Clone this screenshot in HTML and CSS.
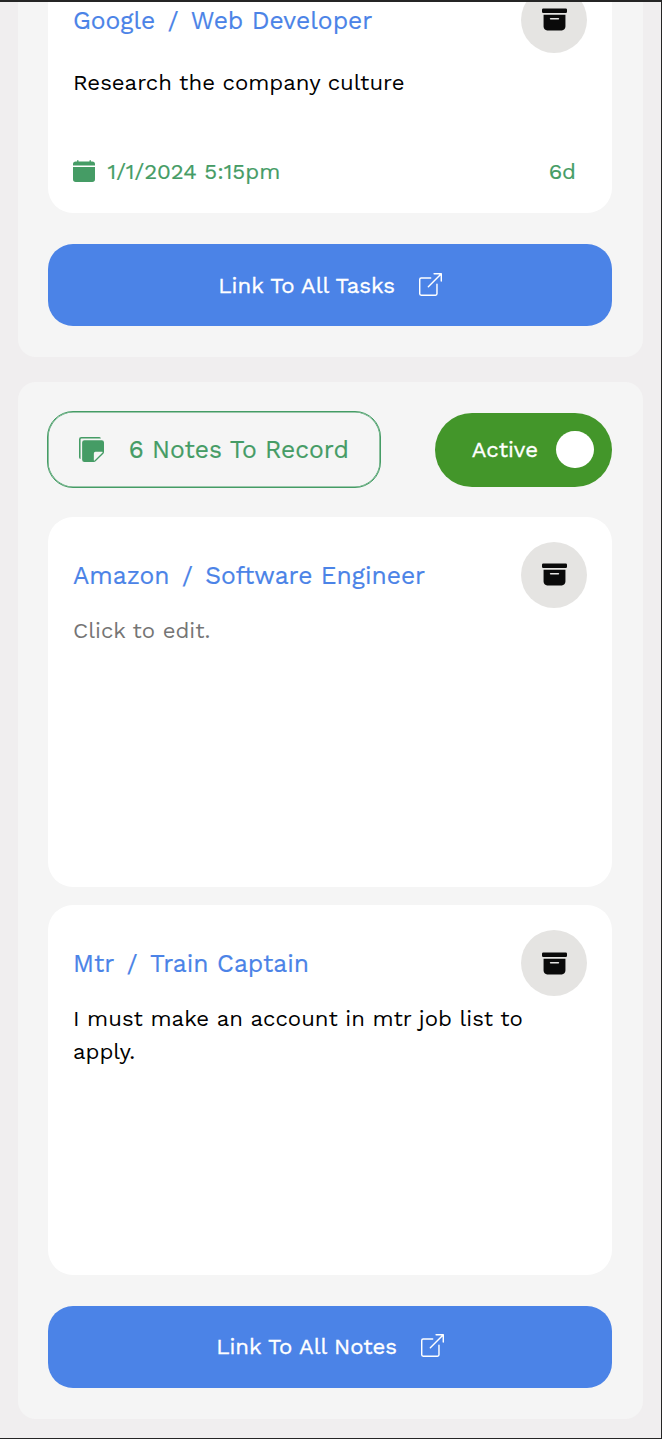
FILE: index.html
```html
<!DOCTYPE html>
<html lang="en">
<head>
<meta charset="utf-8">
<title>Dashboard</title>
<link rel="stylesheet" href="styles.css">
</head>
<body>
<svg class="sprite" aria-hidden="true">
  <symbol id="archive" viewBox="0 0 16 16"><path d="M12.643 15C13.979 15 15 13.845 15 12.5V5H1v7.5C1 13.845 2.021 15 3.357 15zM5.5 7h5a.5.5 0 0 1 0 1h-5a.5.5 0 0 1 0-1M.8 1a.8.8 0 0 0-.8.8V3a.8.8 0 0 0 .8.8h14.4A.8.8 0 0 0 16 3V1.8a.8.8 0 0 0-.8-.8z"/></symbol>
  <symbol id="calendar" viewBox="0 0 16 16"><path d="M3.5 0a.5.5 0 0 1 .5.5V1h8V.5a.5.5 0 0 1 1 0V1h1a2 2 0 0 1 2 2v11a2 2 0 0 1-2 2H2a2 2 0 0 1-2-2V5h16V4H0V3a2 2 0 0 1 2-2h1V.5a.5.5 0 0 1 .5-.5"/></symbol>
  <symbol id="stickies" viewBox="0 0 16 16"><path d="M0 1.5V13a1 1 0 0 0 1 1V1.5a.5.5 0 0 1 .5-.5H14a1 1 0 0 0-1-1H1.5A1.5 1.5 0 0 0 0 1.5"/><path d="M3.5 2A1.5 1.5 0 0 0 2 3.5v11A1.5 1.5 0 0 0 3.5 16h6.086a1.5 1.5 0 0 0 1.06-.44l4.915-4.914A1.5 1.5 0 0 0 16 9.586V3.5A1.5 1.5 0 0 0 14.5 2zm6 8.5a1 1 0 0 1 1-1h4.396a.25.25 0 0 1 .177.427l-5.146 5.146a.25.25 0 0 1-.427-.177z"/></symbol>
  <symbol id="external" viewBox="0 0 16 16"><path d="M8.636 3.5a.5.5 0 0 0-.5-.5H1.5A1.5 1.5 0 0 0 0 4.5v10A1.5 1.5 0 0 0 1.5 16h10a1.5 1.5 0 0 0 1.5-1.5V7.864a.5.5 0 0 0-1 0V14.5a.5.5 0 0 1-.5.5h-10a.5.5 0 0 1-.5-.5v-10a.5.5 0 0 1 .5-.5h6.636a.5.5 0 0 0 .5-.5"/><path d="M16 .5a.5.5 0 0 0-.5-.5h-5a.5.5 0 0 0 0 1h3.793L6.146 9.146a.5.5 0 1 0 .708.708L15 1.707V5.5a.5.5 0 0 0 1 0z"/></symbol>
</svg>
<main class="page">
  <section class="panel panel-tasks">
    <article class="card task">
      <header class="card-head">
        <h2 class="title"><span>Google</span><span class="slash">/</span><span>Web Developer</span></h2>
        <button class="archive" aria-label="Archive"><svg><use href="#archive"/></svg></button>
      </header>
      <p class="text">Research the company culture</p>
      <footer class="due"><svg><use href="#calendar"/></svg><span>1/1/2024 5:15pm</span><span class="left">6d</span></footer>
    </article>
    <a class="link"><span>Link To All Tasks</span><svg><use href="#external"/></svg></a>
  </section>
  <section class="panel panel-notes">
    <div class="toolbar">
      <div class="count"><svg><use href="#stickies"/></svg><span>6 Notes To Record</span></div>
      <button class="toggle"><span>Active</span><i class="knob"></i></button>
    </div>
    <article class="card note">
      <header class="card-head">
        <h2 class="title"><span>Amazon</span><span class="slash">/</span><span>Software Engineer</span></h2>
        <button class="archive" aria-label="Archive"><svg><use href="#archive"/></svg></button>
      </header>
      <p class="text placeholder">Click to edit.</p>
    </article>
    <article class="card note">
      <header class="card-head">
        <h2 class="title"><span>Mtr</span><span class="slash">/</span><span>Train Captain</span></h2>
        <button class="archive" aria-label="Archive"><svg><use href="#archive"/></svg></button>
      </header>
      <p class="text">I must make an account in mtr job list to apply.</p>
    </article>
    <a class="link"><span>Link To All Notes</span><svg><use href="#external"/></svg></a>
  </section>
</main>
</body>
</html>
```
FILE: styles.css
```css
* { box-sizing: border-box; margin: 0; }
body { font-family: "Work Sans", Inter, sans-serif; color: #000; }
svg { fill: currentColor; flex: none; display: block; }
button { border: 0; font: inherit; padding: 0; }
.sprite { display: none; }
.page {
  height: 1439px;
  overflow: hidden;
  background: #f0eeef;
  border: solid #252525;
  border-width: 2px 1px 1px 0;
  padding: 0 18px 0 17.5px;
  display: flex;
  flex-direction: column;
  gap: 25px;
}
.panel { background: #f5f5f5; padding: 0 31px 0 30.7px; border-radius: 18px; flex: none; }
.panel-tasks { height: 355px; border-radius: 0 0 18px 18px; }
.panel-notes { height: 1036.7px; padding-top: 29px; }
.card { background: #fff; border-radius: 25px; padding: 25px 24.8px; }
.card-head { display: flex; align-items: center; justify-content: space-between; height: 66px; }
.title { display: flex; color: #4b83e7; font-size: 24.64px; font-weight: 400; line-height: 30px; white-space: nowrap; padding-top: 1.5px; -webkit-text-stroke: 0.2px; }
.slash { width: 35.6px; text-align: center; }
.archive { width: 66px; height: 66px; border-radius: 50%; background: #e5e4e2; color: #0a0a0a; display: grid; place-items: center; }
.archive svg { width: 25px; height: 25px; margin: -0.5px 0 0 0.4px; }
.text { font-size: 22.18px; line-height: 33px; margin-top: 6px; padding-right: 30px; }
.placeholder { color: #757575; }
.task { height: 226px; margin-top: -15px; padding-top: 0; border-radius: 0 0 25px 25px; }
.task .text { margin-top: 13px; }
.due { display: flex; align-items: center; color: #459c65; font-size: 22.18px; line-height: 30px; margin-top: 57px; padding-right: 11.2px; white-space: nowrap; -webkit-text-stroke: 0.2px; }
.due svg { width: 22px; height: 22px; margin-right: 12.5px; }
.left { margin-left: auto; }
.link { display: flex; align-items: center; justify-content: center; height: 82px; margin-top: 31px; border-radius: 25px; background: #4b83e7; color: #fff; font-size: 22.18px; line-height: 30px; -webkit-text-stroke: 0.35px; }
.link span { padding-bottom: 1px; }
.link svg { width: 23px; height: 23px; margin: 0 0 2px 24px; }
.toolbar { display: flex; align-items: center; justify-content: space-between; height: 77px; margin-left: -1.5px; }
.count { width: 334.5px; height: 77px; border: 1px solid #459c65; box-shadow: inset 0 0 0 0.6px #459c65; border-radius: 26px; display: flex; align-items: center; padding-left: 31.5px; color: #459c65; font-size: 24.64px; -webkit-text-stroke: 0.2px; }
.count svg { width: 25px; height: 25px; margin-right: 24.5px; }
.toggle { width: 177px; height: 74px; border-radius: 37px; background: #43962a; color: #fff; font-size: 22.18px; -webkit-text-stroke: 0.35px; display: flex; align-items: center; justify-content: space-between; padding: 0 18.5px 0 36.8px; }
.toggle span { padding-bottom: 2px; }
.knob { width: 37.5px; height: 37.5px; border-radius: 50%; background: #fff; }
.note { height: 370px; margin-top: 29px; }
.note + .note { margin-top: 18.3px; }
.note + .link { margin-top: 30.7px; }
```
